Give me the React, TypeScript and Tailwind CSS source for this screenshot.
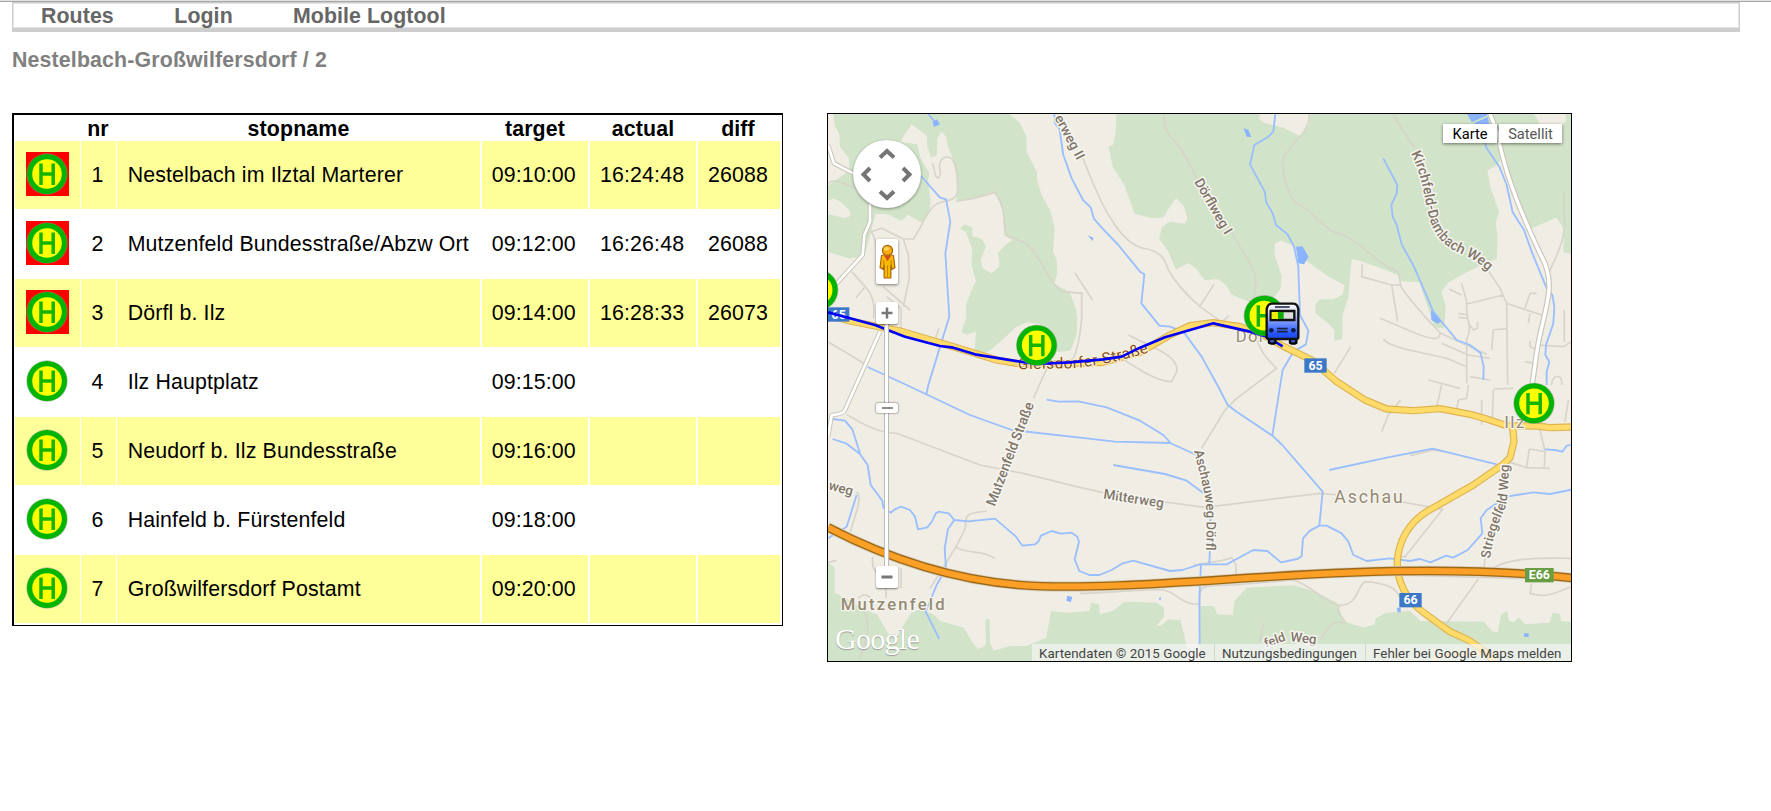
import React from "react";

type Stop = { nr: number; name: string; target: string; actual?: string; diff?: string };

const stops: Stop[] = [
  { nr: 1, name: "Nestelbach im Ilztal Marterer", target: "09:10:00", actual: "16:24:48", diff: "26088" },
  { nr: 2, name: "Mutzenfeld Bundesstraße/Abzw Ort", target: "09:12:00", actual: "16:26:48", diff: "26088" },
  { nr: 3, name: "Dörfl b. Ilz", target: "09:14:00", actual: "16:28:33", diff: "26073" },
  { nr: 4, name: "Ilz Hauptplatz", target: "09:15:00" },
  { nr: 5, name: "Neudorf b. Ilz Bundesstraße", target: "09:16:00" },
  { nr: 6, name: "Hainfeld b. Fürstenfeld", target: "09:18:00" },
  { nr: 7, name: "Großwilfersdorf Postamt", target: "09:20:00" },
];

function SignShape() {
  return (
    <>
      <circle cx="21" cy="22" r="20.7" fill="#8a9a8a" opacity="0.6" />
      <circle cx="21" cy="22" r="20" fill="#00b400" />
      <circle cx="21" cy="22" r="14.8" fill="#ffff00" />
      <path d="M15 11.6V33M27.2 11.6V33M15 22H27.2" fill="none" stroke="#14b400" strokeWidth="3.5" />
    </>
  );
}

function StopSign({ passed }: { passed: boolean }) {
  return (
    <svg viewBox="0 0 43 44" className={passed ? "h-[44px] w-[43px] bg-[#ff0000]" : "h-[44px] w-[43px]"}>
      <SignShape />
    </svg>
  );
}

function MapSign({ x, y }: { x: number; y: number }) {
  return (
    <g transform={`translate(${x - 63} ${y - 66}) scale(3)`}>
      <SignShape />
    </g>
  );
}

const headers = ["", "nr", "stopname", "target", "actual", "diff"];
const cols = "grid grid-cols-[66px_36px_365px_108px_108px_82px]";

function StopTable() {
  return (
    <div className="h-[513px] w-[771px] shrink-0 border-t-2 border-r border-b border-l-2 border-black pl-px tracking-[0.14px]">
      <div className={`${cols} h-[26px] text-center leading-[28px] font-bold`}>
        {headers.map((h, i) => (
          <div key={i} className="pr-[2px]">{h}</div>
        ))}
      </div>
      <div className="flex flex-col gap-px">
        {stops.map((s) => {
          const bg = s.nr % 2 ? "bg-[#ffff99]" : "";
          return (
            <div key={s.nr} className={`${cols} h-[68px] leading-[68px]`}>
              <div className={`mr-px pt-[11px] pl-[11px] ${bg}`}><StopSign passed={s.nr < 4} /></div>
              <div className={`mr-px pl-[10.5px] ${bg}`}>{s.nr}</div>
              <div className={`mr-[2px] pl-[10.67px] whitespace-nowrap ${bg}`}>{s.name}</div>
              <div className={`mr-[2px] pl-[9.67px] ${bg}`}>{s.target}</div>
              <div className={`mr-[2px] pl-[10px] ${bg}`}>{s.actual}</div>
              <div className={`pl-[10px] ${bg}`}>{s.diff}</div>
            </div>
          );
        })}
      </div>
    </div>
  );
}

const forests = [
  "M42,27 L46,60 60,88 62,125 88,158 90,190 80,205 24,245 24,285 40,278 65,290 92,318 92,335 75,342 24,330 24,438 45,445 85,458 115,455 135,440 165,325 200,325 245,345 262,327 305,350 325,320 330,295 322,225 326,205 300,160 290,120 240,112 250,90 275,55 300,75 322,90 324,125 335,155 348,150 350,100 365,75 380,95 385,120 400,160 413,220 415,270 410,288 460,280 500,265 525,262 540,290 550,320 555,390 580,405 560,420 535,445 540,465 540,485 515,507 485,490 480,465 495,425 485,405 455,395 455,370 435,360 423,370 440,380 458,430 457,480 470,530 455,560 440,600 440,640 427,680 440,687 470,677 466,742 500,740 520,725 560,690 585,665 620,650 660,655 700,740 750,735 768,690 770,640 765,610 750,570 735,555 700,540 710,505 708,465 697,440 702,370 688,315 665,275 650,230 648,200 618,142 617,95 598,55 565,27Z",
  "M892,27 L888,90 880,122 868,125 880,185 915,240 945,325 1000,338 1030,335 1050,300 1068,276 1095,305 1105,345 1095,358 1050,352 1027,368 1020,402 1045,435 1068,490 1105,472 1130,490 1155,523 1195,520 1220,540 1235,567 1290,590 1350,590 1380,550 1383,515 1362,450 1362,415 1380,405 1420,420 1440,450 1480,480 1530,515 1576,540 1570,570 1540,585 1500,585 1488,600 1490,625 1530,658 1546,675 1545,705 1565,700 1566,630 1583,575 1593,460 1620,465 1690,490 1738,510 1745,527 1800,530 1820,590 1845,665 1870,668 1875,605 1862,560 1885,530 1940,500 2000,470 2029,460 2030,390 2025,355 2035,320 2010,250 2000,195 2030,180 2050,145 2063,165 2070,240 2130,370 2210,335 2233,370 2232,440 2255,445 2255,27 2240,27 2240,50 2200,82 2160,62 2140,27 1470,27 1470,60 1440,95 1390,70 1330,55 1315,42 1318,27Z",
  "M24,1375 L42,1390 42,1465 75,1480 130,1515 170,1530 205,1590 235,1590 275,1525 300,1515 340,1530 360,1550 430,1570 460,1620 475,1635 500,1620 498,1545 507,1545 508,1615 520,1640 570,1625 620,1625 680,1600 695,1520 740,1525 810,1520 815,1495 835,1500 838,1530 880,1520 915,1492 1010,1495 1030,1510 1030,1535 1008,1560 1020,1567 1045,1545 1080,1548 1095,1610 1100,1668 24,1668Z",
  "M1142,1505 L1180,1505 1190,1530 1240,1532 1245,1490 1280,1450 1420,1443 1480,1460 1550,1495 1570,1550 1630,1570 1665,1560 1670,1540 1700,1525 1770,1520 1800,1550 1990,1552 2015,1580 2035,1585 2045,1530 2060,1520 2065,1550 2085,1553 2095,1540 2115,1560 2190,1555 2200,1525 2218,1528 2222,1550 2255,1553 2255,1668 1142,1668Z",
];

const paths = [
  "M208,27 208,20 M24,235 C45,215 80,245 100,245 M338,175 L345,205 C350,230 368,220 358,185 C360,150 395,145 405,180 C415,210 413,245 412,265 C405,288 380,285 355,295 C320,310 305,370 280,402 L250,402 185,370 140,385 M412,288 L460,280 525,262 C560,310 550,350 557,390 L610,412 C660,440 675,520 725,560 L790,565 M95,500 L140,550 C160,575 165,600 160,640 M155,380 L175,430 M250,402 L265,450 268,520 250,605 M190,545 L270,615 M108,578 L133,548 M200,575 L243,610 243,680 M357,670 L345,705 M24,710 L140,780 M765,505 L818,585 M785,565 L785,640 C780,700 765,770 750,770",
  "M785,150 C820,240 850,310 875,345 C910,400 940,425 980,432 C1020,440 1035,460 1045,495 C1070,540 1100,570 1140,605 L1210,655 M1140,603 L1182,538 M1032,27 C1030,60 1040,90 1065,110 C1100,150 1115,190 1140,240 L1240,390 C1265,440 1300,480 1305,510 C1315,560 1290,590 1305,600 M1467,27 C1475,80 1400,130 1390,160 C1385,220 1410,290 1440,300 C1490,330 1500,360 1540,380 C1620,400 1670,480 1735,500 L1743,545 C1780,600 1820,640 1862,685 L2000,748",
  "M1718,27 L1785,130 M2000,490 L2040,550 2060,595 2063,840 M2060,595 L2165,630 M1940,597 L2050,570 M1925,535 L1940,590 C1935,640 1960,660 1940,705 L1940,835 M1887,552 L1925,570 M1915,625 L1942,630 M1915,637 L1945,640 M1945,655 L1960,675 1972,670 1973,650 M1860,685 C1860,710 1830,700 1800,690 L1680,640 M1715,540 L1733,650 M1627,478 L1625,515 1715,540 1742,540 M2063,670 L2020,675 2015,735 M1690,702 C1710,730 1800,740 1880,760 L1940,785 M1865,715 L1945,750 2010,760 M1825,825 L1920,850 M1950,815 L2010,825 M1592,725 L1543,805 M2232,260 L2232,330 C2240,390 2220,430 2188,500 M2150,565 L2130,565 2115,610 M2130,625 L2125,655 M2155,720 L2230,725 2255,710 M2233,615 L2233,710 M2155,735 L2130,725 2130,708 M2115,770 L2140,775 M2195,840 C2195,805 2230,805 2225,840",
  "M80,928 C130,960 180,985 230,985 L480,1080 610,1105 770,1145 880,1170 1155,1207 1500,1165 1560,1170 M685,780 L640,880 M500,1218 C470,1225 430,1215 437,1265 C425,1300 395,1345 375,1380 L330,1450 M405,1325 C440,1350 480,1330 525,1360 M24,1372 L50,1366 M110,1160 C130,1180 100,1240 92,1280 M158,1355 C155,1390 165,1410 198,1420 L198,1480 M243,1390 V1450 M115,1480 C130,1460 160,1475 150,1490 M130,1515 C160,1570 130,1620 120,1665 M1145,1030 L1215,915 1250,880 1370,790 C1330,750 1300,730 1303,600",
  "M925,690 C980,720 1080,750 1070,800 L1055,830 C1010,830 930,780 880,740 M1200,655 L1227,632 M780,1465 C850,1465 1000,1450 1030,1455 C1070,1460 1080,1500 1140,1498 C1135,1430 1150,1445 1240,1440 L1420,1425 C1470,1440 1500,1480 1550,1500 C1620,1510 1610,1430 1640,1430 C1700,1435 1730,1450 1738,1475 M1120,1380 C1180,1370 1200,1370 1235,1358 L1248,1380 1248,1440 M1330,1555 L1320,1610 M1560,1500 C1540,1530 1580,1540 1575,1555 C1530,1540 1520,1580 1500,1605 M1740,1190 L1868,1213 1755,1355 1735,1355 M1770,1052 L1840,1035 1870,1040 M2063,1070 L2120,1088 2190,1090 M2120,1085 L2128,1032 2175,1040 2173,1085 M2160,975 L2175,1040 M1880,1555 L1990,1400 2000,1330 M1990,1410 C2050,1350 2180,1360 2255,1360 M1733,1410 L2255,1425 M2135,1435 L2130,1465 C2180,1480 2200,1465 2255,1445 M1685,980 L1705,930 1742,885 M1865,840 L1850,905 M1910,915 L1915,885 1940,880 1945,840 M1985,885 V960 M2020,855 L2017,945 M2245,885 L2235,950 M2020,852 L2080,850",
];

const streams = [
  "M325,27 L348,55 M303,213 L360,278 378,283 391,350 376,445 388,635 360,725 325,840 319,868 M703,27 L705,55 718,70 730,150 755,220 789,285 812,307 821,340 845,368 895,420 960,500 973,508 964,595 1018,662 1050,665 1090,680 1145,755 1192,840 1223,900 1250,920 1357,992 1387,1020 1508,1160 1498,1262 1520,1262 1565,1285 1585,1310 1600,1350 1640,1368 1710,1360 1770,1368 1800,1362 1832,1372 1878,1352 1900,1358 1943,1335 1987,1285 1982,1240 2000,1215 2060,1175 2140,1162 2190,1167 2255,1154",
  "M1366,27 L1360,80 1345,95 1303,120 1290,178 1335,262 1338,290 1358,325 1368,360 1402,387 1422,425 1435,485 1440,630 1465,677 1458,718 1420,740 1388,795 1380,845 1357,992",
  "M1690,160 L1732,240 1730,265 1714,300 1718,335 1730,360 1745,418 1782,485 1840,620 1910,705 1950,720 1982,745 1991,785 1990,825 M1990,100 L2000,130 2038,185 2060,240 2078,322 2112,375 2135,440 2180,550 2197,570 2203,605 2200,655 2178,720 2176,750 2188,770 2180,800 2180,840",
  "M143,786 L260,840 450,930 575,975 780,998 885,1010 1050,1014 1130,1050 M680,884 L715,890 775,889 860,907 960,947 1030,990 1052,1014 M880,1080 L1035,1107 1100,1127 1145,1160 1170,1180 1172,1280 1168,1375",
  "M38,942 L75,947 97,973 120,1045 M38,1002 L78,1015 120,1047 143,1080 152,1140 187,1187 190,1208 212,1223 225,1213 243,1205 270,1215 285,1235 294,1273 322,1267 337,1248 347,1225 357,1220 386,1225 403,1245 445,1249 525,1241 588,1295 607,1322 645,1318 655,1310 663,1292 695,1278 722,1286 755,1283 772,1295 777,1310 764,1363 778,1398 808,1410 838,1410 875,1395 908,1375 940,1367 1050,1398 1087,1395 1140,1378 1220,1378 1250,1362 1300,1335 1342,1338 1383,1372 1432,1362 1445,1353 1449,1300 1470,1277 1498,1262",
  "M403,1245 L384,1272 374,1330 378,1390 350,1440 317,1520 358,1602 M110,1170 L80,1265 24,1300 M1143,1380 L1138,1480 1139,1620 M1528,1095 L1700,1058 1838,1031 2030,1078 M2175,1033 L2205,1035 2227,1040 2240,1022 2255,1020",
];

const busRoute = "M24,622 L165,660 255,695 360,723 395,727 465,748 600,770 650,777 750,772 850,763 905,755 960,728 1035,697 1180,655 1290,680 1340,695 1388,724";
const road65 = "M24,628 L90,648 240,678 400,725 530,765 590,775 700,777 850,772 960,742 1050,690 1110,662 1180,653 1260,665 1330,690 1390,724 1475,765 1550,830 1635,885 1700,912 1780,917 1860,911 1950,928 2000,942 2060,962 2150,963 2190,968 2255,966";
const road66 = "M2078,965 L2082,1010 2070,1058 2050,1078 1960,1140 1820,1220 C1765,1255 1735,1310 1732,1370 C1730,1430 1760,1485 1810,1522 L1890,1580 1945,1605 1995,1640 2020,1668";
const motorway = "M24,1267 C180,1348 380,1422 600,1440 C800,1455 1100,1430 1350,1415 C1700,1392 2000,1390 2255,1419";

function Label({ x, y, r = 0, size = 39, length, children }: { x: number; y: number; r?: number; size?: number; length?: number; children: string }) {
  return (
    <text transform={`translate(${x} ${y}) rotate(${r})`} fontSize={size} textLength={length} fill="#80766a" stroke="#f7f5f0" strokeWidth="9" paintOrder="stroke" strokeLinejoin="round" fontWeight="500">
      {children}
    </text>
  );
}

function Shield({ x, y, w, color, children }: { x: number; y: number; w: number; color: string; children: string }) {
  return (
    <g>
      <rect x={x} y={y} width={w} height="43" fill={color} />
      <text x={x + w / 2} y={y + 34} textAnchor="middle" fontSize="37" fontWeight="700" fill="#fff">{children}</text>
    </g>
  );
}

function Bus() {
  return (
    <g transform="translate(1337 592)">
      <path d="M10 104h19v17q-9 6-19 0zM73 104h19v17q-9 6-19 0z" fill="#3d63dc" stroke="#000" strokeWidth="7" />
      <path d="M18 4H84Q96 5 98 22V105Q98 110 92 110H9Q3 110 3 105V22Q5 5 18 4Z" fill="url(#busPaint)" stroke="#111" strokeWidth="7" />
      <path d="M15 26H86V53H15Z" fill="#dedede" stroke="#111" strokeWidth="7" />
      <path d="M18 29H37V50H18Z" fill="#e8ef00" />
      <path d="M37 29H54V50H37Z" fill="#12a900" />
      <path d="M28 14H72M34 79H66M34 88H66" stroke="#18213f" strokeWidth="5" />
      <circle cx="17" cy="84" r="7" fill="#101a45" />
      <circle cx="83" cy="84" r="7" fill="#101a45" />
    </g>
  );
}

function Pegman() {
  return (
    <svg viewBox="0 0 50 104" className="h-[35px] w-[17px]">
      <path d="M7 35Q25 26 43 35L47 70 38 75 35 62V101H15V62L12 75 3 70Z" fill="#f9b900" stroke="#a86408" strokeWidth="3.5" />
      <path d="M15 34L25 51 36 34Z" fill="#d64a20" />
      <path d="M25 64V99M14 48V65M36 48V65" stroke="#b97905" strokeWidth="2.5" />
      <circle cx="25" cy="19" r="15" fill="#f9aa10" stroke="#a86408" strokeWidth="3.5" />
      <ellipse cx="22" cy="14" rx="8" ry="6" fill="#ffd45c" />
    </svg>
  );
}

function MapDrawing() {
  return (
    <svg viewBox="24 27 2229 1641" className="block h-[547px] w-[743px] font-['Roboto',sans-serif]">
      <defs>
        <linearGradient id="busPaint" x1="0" y1="0" x2="0" y2="1">
          <stop offset="0" stopColor="#ffffff" />
          <stop offset="0.22" stopColor="#d9dcf0" />
          <stop offset="0.5" stopColor="#7e9bff" />
          <stop offset="0.85" stopColor="#2454ff" />
          <stop offset="1" stopColor="#1f46dc" />
        </linearGradient>
        <path id="kirchfeldLine" d="M1773,145 C1808,215 1814,290 1830,345 C1851,415 1901,439 1941,454 Q1981,474 2020,514" />
        <path id="aschauLine" d="M1122,1038 C1133,1085 1157,1160 1159,1220 Q1161,1290 1157,1360" />
        <path id="striegelLine" d="M2010,1361 C2018,1300 2037,1245 2053,1215 C2068,1180 2064,1120 2068,1060" />
        <path id="gleisLine" d="M594,793 L750,790 Q850,785 1010,735" />
      </defs>
      <rect x="24" y="27" width="2229" height="1641" fill="#f0ede5" />
      {forests.map((d) => <path key={d} d={d} fill="#d1e3c8" strokeLinejoin="round" stroke="#d1e3c8" strokeWidth="4" />)}
      <g fill="none" stroke="#d8d4c9" strokeWidth="5" strokeLinejoin="round">
        {paths.map((d) => <path key={d} d={d} />)}
      </g>
      <g fill="none" stroke="#99bfff" strokeWidth="5.5" strokeLinejoin="round">
        {streams.map((d) => <path key={d} d={d} />)}
      </g>
      <path d="M338,50L350,43 360,58 342,66ZM1941,27H2001L2008,58 1992,72 1955,50ZM1428,425L1447,424 1466,455 1452,478 1435,475ZM1271,70L1285,74 1294,96 1280,95ZM803,391L820,398 818,408ZM1833,615L1865,650 1852,656 1834,645ZM742,1472L757,1476 752,1492 739,1487ZM1015,1482L1023,1475 1022,1486ZM2112,1585H2126V1596H2112ZM1730,1508H1742V1522H1733Z" fill="#8ab4ff" />
      <path d="M1955,55L2005,32" stroke="#d1e3c8" strokeWidth="5" />
      <g fill="none" strokeLinejoin="round">
        <g stroke="#cbc5ba" strokeWidth="14">
          <path d="M24,120 L42,175 100,205 M150,295 L150,350 133,390 128,450 55,530 24,560 M180,680 L75,915 Q70,928 35,930 L24,995" />
          <path d="M2010,27 L2035,90 C2050,200 2110,340 2165,455 Q2190,500 2187,555 C2180,630 2155,680 2145,780 L2132,870" strokeWidth="17" />
        </g>
        <g stroke="#fff" strokeWidth="8">
          <path d="M24,120 L42,175 100,205 M150,295 L150,350 133,390 128,450 55,530 24,560 M180,680 L75,915 Q70,928 35,930 L24,995" />
          <path d="M2010,27 L2035,90 C2050,200 2110,340 2165,455 Q2190,500 2187,555 C2180,630 2155,680 2145,780 L2132,870" strokeWidth="10" />
        </g>
        <path d="M1842,1668 L1850,1650 1960,1645 2050,1645" stroke="#ffe7a0" strokeWidth="14" />
        <g stroke="#e0b452" strokeWidth="22"><path d={road65} /><path d={road66} /></g>
        <g stroke="#ffdc69" strokeWidth="15"><path d={road65} /><path d={road66} /></g>
        <path d={motorway} stroke="#d8d2c2" strokeWidth="31" />
        <path d={motorway} stroke="#9e6815" strokeWidth="26" />
        <path d={motorway} stroke="#fb9f27" strokeWidth="18" />
      </g>

      <Label x={703} y={38} r={62} size={41}>erweg II</Label>
      <Label x={1122} y={230} r={60} size={41}>Dörflweg I</Label>
      <Label x={524} y={1206} r={-69} size={42} length={330}>Mutzenfeld Straße</Label>
      <Label x={849} y={1180} r={9} size={41} length={183}>Mitterweg</Label>
      <Label x={24} y={1153} r={15} size={40}>weg</Label>
      <Label x={1338} y={1628} r={-20} size={38}>feld</Label>
      <Label x={1410} y={1609} r={6} size={40}>Weg</Label>
      <g fill="#80766a" stroke="#f7f5f0" strokeWidth="9" paintOrder="stroke" strokeLinejoin="round" fontWeight="500">
        <text fontSize="42"><textPath href="#kirchfeldLine" textLength="448">Kirchfeld-Dambach Weg</textPath></text>
        <text fontSize="40"><textPath href="#aschauLine" textLength="302">Aschauweg Dörfl</textPath></text>
        <text fontSize="40"><textPath href="#striegelLine" textLength="290">Striegelfeld Weg</textPath></text>
      </g>
      <text fontSize="46" fill="#8a4f21" stroke="#fff4da" strokeWidth="6" paintOrder="stroke">
        <textPath href="#gleisLine" textLength="398">Gleisdorfer Straße</textPath>
      </text>
      <g fill="#958a72" stroke="#f7f5f0" strokeWidth="7" paintOrder="stroke">
        <text x="62" y="1516" fontSize="50" fontWeight="500" textLength="312">Mutzenfeld</text>
        <text x="1543" y="1194" fontSize="53" textLength="205">Aschau</text>
        <text x="1247" y="710" fontSize="50" letterSpacing="4">Dörfl</text>
        <text x="2053" y="968" fontSize="52" letterSpacing="4">Ilz</text>
      </g>
      <Shield x={24} y={607} w={64} color="#3c78c8">65</Shield>
      <Shield x={1453} y={760} w={67} color="#3c78c8">65</Shield>
      <Shield x={1738} y={1464} w={67} color="#3c78c8">66</Shield>
      <Shield x={2115} y={1389} w={86} color="#679d43">E66</Shield>

      <path d={busRoute} fill="none" stroke="#0000fa" strokeWidth="8" strokeLinejoin="round" />
      <MapSign x={-7} y={555} />
      <MapSign x={650} y={721} />
      <MapSign x={1333} y={632} />
      <MapSign x={2142} y={895} />
      <Bus />
    </svg>
  );
}

function MapControls() {
  return (
    <>
      <svg viewBox="0 0 68 68" className="absolute top-[26px] left-[25px] h-[68px] w-[68px] rounded-full bg-white shadow-[0_1px_3px_rgba(0,0,0,0.4)]">
        <path d="M27 17.5L34 11 41 17.5M27 51.5L34 58 41 51.5M17 28L10.5 34.5 17 41M50 28L56.5 34.5 50 41" fill="none" stroke="#757575" strokeWidth="4" />
      </svg>
      <div className="absolute top-[125px] left-[48px] flex h-[45px] w-[22px] items-center justify-center rounded-xs bg-white shadow-[0_1px_3px_rgba(0,0,0,0.5)]">
        <Pegman />
      </div>
      <div className="absolute top-[210px] left-[56px] h-[243px] w-[5px] border-x border-[#bbb] bg-white" />
      <svg viewBox="0 0 22 22" className="absolute top-[188px] left-[48px] h-[22px] w-[22px] rounded-xs bg-white shadow-[0_1px_2px_rgba(0,0,0,0.5)]">
        <path d="M5.5 11H16.5M11 5.5V16.5" stroke="#777" strokeWidth="2.5" />
      </svg>
      <svg viewBox="0 0 22 10" className="absolute top-[289px] left-[48px] h-[10px] w-[22px] rounded-xs bg-white shadow-[0_0_2px_rgba(0,0,0,0.8)]">
        <path d="M6 5H17" stroke="#666" strokeWidth="1.3" />
      </svg>
      <svg viewBox="0 0 22 22" className="absolute top-[452px] left-[48px] h-[22px] w-[22px] rounded-xs bg-white shadow-[0_1px_2px_rgba(0,0,0,0.5)]">
        <path d="M5.5 11H16.5" stroke="#777" strokeWidth="2.8" />
      </svg>
      <div className="absolute top-[10px] right-[9px] flex gap-[2px] text-[14.67px] leading-[20px]">
        <div className="h-[19px] w-[54px] bg-white text-center text-black shadow-[0_1px_3px_rgba(0,0,0,0.5)]">Karte</div>
        <div className="h-[19px] w-[63px] bg-white text-center text-[#565656] shadow-[0_1px_3px_rgba(0,0,0,0.5)]">Satellit</div>
      </div>
      <div className="absolute bottom-[6px] left-[7px] font-['Liberation_Serif',serif] text-[30px] leading-[32px] tracking-[-0.7px] text-white [text-shadow:0_1px_1px_#999]">Google</div>
      <div className="absolute right-0 bottom-0 flex h-[17px] bg-[#f5f5f5]/70 text-[13.33px] leading-[19px] tracking-[0.06px] whitespace-nowrap text-[#444]">
        <span className="w-[182px] pl-[7px]">Kartendaten © 2015 Google</span>
        <span className="w-[151px] border-l border-[#cddbc6] pl-[7px]">Nutzungsbedingungen</span>
        <span className="w-[206px] border-l border-[#cddbc6] pl-[7px]">Fehler bei Google Maps melden</span>
      </div>
    </>
  );
}

export default function App() {
  return (
    <div className="h-[811px] overflow-hidden bg-white font-['Liberation_Sans',Arial,sans-serif] text-[21.33px] text-black">
      <div className="h-[2px] border-b border-[#a8a8a8] bg-[#e2e2e2]" />
      <nav className="ml-[12px] h-[30px] w-[1728px] border border-b-4 border-[#cdcdcd]">
        <div className="flex h-[25px] border border-[#e4e4e4] pl-[27px] leading-[24px] font-bold tracking-[0.08px] text-[#666]">
          <span className="w-[133.3px]">Routes</span>
          <span className="w-[118.7px]">Login</span>
          <span>Mobile Logtool</span>
        </div>
      </nav>
      <h1 className="mt-[15px] ml-[12px] h-[66px] leading-[26px] font-bold tracking-[0.15px] text-[#808080]">Nestelbach-Großwilfersdorf / 2</h1>
      <main className="flex items-start gap-[44px] pl-[12px]">
        <StopTable />
        <section className="relative h-[549px] w-[745px] shrink-0 overflow-hidden border border-black font-['Roboto',sans-serif]">
          <MapDrawing />
          <MapControls />
        </section>
      </main>
    </div>
  );
}
